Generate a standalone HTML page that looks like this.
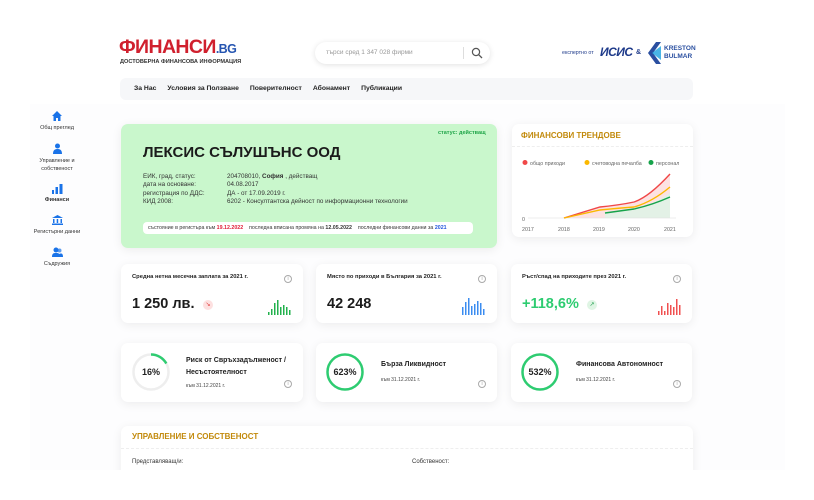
<!DOCTYPE html>
<html><head><meta charset="utf-8"><style>
*{margin:0;padding:0;box-sizing:border-box}
body{width:814px;height:500px;overflow:hidden;background:#fff;font-family:"Liberation Sans",sans-serif;color:#222;position:relative}
.a{position:absolute}
.card{position:absolute;background:#fff;border-radius:7px;box-shadow:0 2px 10px rgba(0,0,0,.07)}
.b{font-weight:bold}
.info{position:absolute;width:8px;height:8px;border:1px solid #aaa;border-radius:50%;font-size:5px;color:#999;text-align:center;line-height:6px}
.sb{position:absolute;width:70px;text-align:center;font-size:5.5px;color:#333;left:22px}
</style></head><body>
<div class="a" style="left:30px;top:104px;width:755px;height:370px;background:#fdfdfe"></div>
<div class="a b" style="left:119px;top:36px;font-size:19.5px;color:#d0202e;letter-spacing:-0.6px">ФИНАНСИ<span style="color:#2454b0;font-size:12.5px">.BG</span></div>
<div class="a b" style="left:120px;top:59px;font-size:5.6px;color:#333">ДОСТОВЕРНА ФИНАНСОВА ИНФОРМАЦИЯ</div>
<div class="a" style="left:315px;top:42px;width:175px;height:22px;border-radius:11px;box-shadow:0 1px 6px rgba(0,0,0,.12);background:#fff"></div>
<div class="a" style="left:326px;top:49px;font-size:6.5px;color:#999">търси сред 1 347 028 фирми</div>
<div class="a" style="left:463px;top:47px;width:1px;height:12px;background:#ddd"></div>
<svg class="a" style="left:471px;top:47px" width="12" height="12" viewBox="0 0 12 12"><circle cx="5" cy="5" r="3.6" fill="none" stroke="#555" stroke-width="1.2"/><path d="M7.7 7.7L11 11" stroke="#555" stroke-width="1.3"/></svg>
<div class="a" style="left:562px;top:50px;font-size:5.3px;color:#1e3a8a">експертно от</div>
<div class="a b" style="left:600px;top:45px;font-size:12px;color:#1e3a8a;font-style:italic;letter-spacing:-0.5px">ИСИС</div>
<div class="a b" style="left:636px;top:49px;font-size:7px;color:#1e3a8a">&amp;</div>
<svg class="a" style="left:647px;top:42px" width="16" height="22" viewBox="0 0 16 22"><path d="M9 0L1 11L9 22H14L6 11L14 0Z" fill="#2a4fa0"/><path d="M5 11L14 4V18Z" fill="#1ca3e0" opacity=".8"/></svg>
<div class="a b" style="left:664px;top:45px;font-size:6.5px;color:#2a4fa0;line-height:8px">KRESTON<br>BULMAR</div>
<div class="a" style="left:120px;top:78px;width:573px;height:22px;background:#f6f7f9;border-radius:6px"></div>
<div class="a b" style="left:134px;top:85px;font-size:6.8px;color:#222;word-spacing:0">За Нас<span style="margin-left:11px">Условия за Ползване</span><span style="margin-left:11px">Поверителност</span><span style="margin-left:11px">Абонамент</span><span style="margin-left:11px">Публикации</span></div>
<svg class="a" style="left:52px;top:111px" width="10" height="10" viewBox="0 0 10 10"><path d="M5 0L0 5H1.5V10H4V7H6V10H8.5V5H10Z" fill="#1a73e8"/></svg>
<div class="sb" style="top:125px">Общ преглед</div>
<svg class="a" style="left:53px;top:143px" width="9" height="11" viewBox="0 0 9 11"><circle cx="4.5" cy="3" r="2.5" fill="#1a73e8"/><path d="M0 11C0 7 2 6 4.5 6S9 7 9 11Z" fill="#1a73e8"/></svg>
<div class="sb" style="top:157px;line-height:8px">Управление и<br>собственост</div>
<svg class="a" style="left:52px;top:183px" width="11" height="11" viewBox="0 0 11 11"><rect x="0" y="7" width="2" height="4" fill="#1a73e8"/><rect x="3.5" y="4" width="2.5" height="7" fill="#1a73e8"/><rect x="7.5" y="1" width="3" height="10" fill="#1a73e8"/></svg>
<div class="sb b" style="top:197px">Финанси</div>
<svg class="a" style="left:52px;top:215px" width="11" height="10" viewBox="0 0 11 10"><path d="M5.5 0L0 3H11Z" fill="#1a73e8"/><rect x="1" y="4" width="1.5" height="4" fill="#1a73e8"/><rect x="4.7" y="4" width="1.5" height="4" fill="#1a73e8"/><rect x="8.5" y="4" width="1.5" height="4" fill="#1a73e8"/><rect x="0" y="8.5" width="11" height="1.5" fill="#1a73e8"/></svg>
<div class="sb" style="top:229px">Регистърни данни</div>
<svg class="a" style="left:52px;top:247px" width="11" height="10" viewBox="0 0 11 10"><circle cx="4" cy="3" r="2.5" fill="#1a73e8"/><circle cx="7.5" cy="3.5" r="2" fill="#1a73e8" opacity=".7"/><path d="M0 10C0 6 2 6 4 6S8 6 8 10Z M6 10C6 7 8 6.5 9 6.5S11 7 11 10Z" fill="#1a73e8"/></svg>
<div class="sb" style="top:261px">Съдружия</div>

<div class="card" style="left:121px;top:124px;width:376px;height:124px;background:#c9f7cc"></div>
<div class="a b" style="left:438px;top:130px;font-size:5.5px;color:#1fa548">статус: действащ</div>
<div class="a b" style="left:143px;top:144px;font-size:15px;color:#1b1b1b">ЛЕКСИС СЪЛУШЪНС ООД</div>
<div class="a" style="left:143px;top:173px;font-size:6.3px;color:#333;line-height:8.3px">ЕИК, град, статус:<br>дата на основане:<br>регистрация по ДДС:<br>КИД 2008:</div>
<div class="a" style="left:227px;top:173px;font-size:6.3px;color:#333;line-height:8.3px">204708010, <b>София</b> , действащ<br>04.08.2017<br>ДА - от 17.09.2019 г.<br>6202 - Консултантска дейност по информационни технологии</div>
<div class="a" style="left:143px;top:222px;width:330px;height:12px;background:#fff;border-radius:4px;font-size:5.3px;color:#333;line-height:12px;padding-left:5px;white-space:nowrap">състояние в регистъра към <b style="color:#e0203a">19.12.2022</b>&nbsp;&nbsp;&nbsp;&nbsp;последна вписана промяна на <b>12.05.2022</b>&nbsp;&nbsp;&nbsp;&nbsp;последни финансови данни за <b style="color:#2255dd">2021</b></div>

<div class="card" style="left:512px;top:124px;width:181px;height:113px"></div>
<div class="a b" style="left:521px;top:131px;font-size:8px;color:#c28a0c">ФИНАНСОВИ ТРЕНДОВЕ</div>
<div class="a" style="left:512px;top:146px;width:181px;border-top:1px dashed #eee"></div>
<svg class="a" style="left:512px;top:150px" width="181" height="85" viewBox="0 0 181 85">
<circle cx="13" cy="12.5" r="2.5" fill="#f04848"/><text x="18" y="15" font-size="5.3" fill="#666" font-family="Liberation Sans">общо приходи</text>
<circle cx="75" cy="12.5" r="2.5" fill="#fbb800"/><text x="80" y="15" font-size="5.3" fill="#666" font-family="Liberation Sans">счетоводна печалба</text>
<circle cx="139" cy="12.5" r="2.5" fill="#16a34a"/><text x="144" y="15" font-size="5.3" fill="#666" font-family="Liberation Sans">персонал</text>
<path d="M52 68L88 57Q108 55 122 52Q137 47 158 24V68Z" fill="#fde2e2"/>
<path d="M93 68V63L122 59Q140 55 158 43V68Z" fill="#e3f1e6"/>
<line x1="16" y1="68" x2="164" y2="68" stroke="#ddd" stroke-width=".6"/>
<path d="M52 68L88 57Q108 55 122 52Q137 47 158 24" fill="none" stroke="#f04848" stroke-width="1.4"/>
<path d="M52 68L88 60Q108 58 122 57Q140 52 158 37" fill="none" stroke="#fbb800" stroke-width="1.4"/>
<path d="M93 63L122 59Q140 55 158 47" fill="none" stroke="#16a34a" stroke-width="1.4"/>
<text x="10" y="71" font-size="5.3" fill="#666" font-family="Liberation Sans">0</text>
<g font-size="5.3" fill="#666" font-family="Liberation Sans"><text x="10" y="81">2017</text><text x="46" y="81">2018</text><text x="81" y="81">2019</text><text x="116" y="81">2020</text><text x="152" y="81">2021</text></g>
</svg>

<div class="card" style="left:121px;top:264px;width:182px;height:59px"></div>
<div class="a b" style="left:132px;top:274px;font-size:5.8px">Средна нетна месечна заплата за 2021 г.</div>
<div class="info" style="left:284px;top:275px">i</div>
<div class="a b" style="left:132px;top:296px;font-size:14.5px;color:#1b1b1b">1 250 лв.</div>
<div class="a" style="left:203px;top:300px;width:10px;height:10px;border-radius:50%;background:#fde0e0;color:#e04040;font-size:6px;text-align:center;line-height:10px">↘</div>
<svg class="a" style="left:268px;top:297px" width="24" height="18"><g fill="#22b14c"><rect x="0" y="15" width="1.5" height="3"/><rect x="3" y="12" width="1.5" height="6"/><rect x="6" y="6" width="1.5" height="12"/><rect x="9" y="3" width="1.5" height="15"/><rect x="12" y="10" width="1.5" height="8"/><rect x="15" y="8" width="1.5" height="10"/><rect x="18" y="10" width="1.5" height="8"/><rect x="21" y="13" width="1.5" height="5"/></g></svg>

<div class="card" style="left:316px;top:264px;width:181px;height:59px"></div>
<div class="a b" style="left:327px;top:274px;font-size:5.8px">Място по приходи в България за 2021 г.</div>
<div class="info" style="left:478px;top:275px">i</div>
<div class="a b" style="left:327px;top:296px;font-size:14.5px;color:#1b1b1b">42 248</div>
<svg class="a" style="left:462px;top:297px" width="24" height="18"><g fill="#3b8cf0"><rect x="0" y="10" width="1.5" height="8"/><rect x="3" y="5" width="1.5" height="13"/><rect x="6" y="1" width="1.5" height="17"/><rect x="9" y="9" width="1.5" height="9"/><rect x="12" y="7" width="1.5" height="11"/><rect x="15" y="4" width="1.5" height="14"/><rect x="18" y="6" width="1.5" height="12"/><rect x="21" y="12" width="1.5" height="6"/></g></svg>

<div class="card" style="left:511px;top:264px;width:181px;height:59px"></div>
<div class="a b" style="left:522px;top:274px;font-size:5.8px">Ръст/спад на приходите през 2021 г.</div>
<div class="info" style="left:673px;top:275px">i</div>
<div class="a b" style="left:522px;top:296px;font-size:14.5px;color:#2ecc71">+118,6%</div>
<div class="a" style="left:587px;top:300px;width:10px;height:10px;border-radius:50%;background:#dff5e4;color:#22a050;font-size:6px;text-align:center;line-height:10px">↗</div>
<svg class="a" style="left:658px;top:297px" width="24" height="18"><g fill="#f05050"><rect x="0" y="14" width="1.5" height="4"/><rect x="3" y="9" width="1.5" height="9"/><rect x="6" y="14" width="1.5" height="4"/><rect x="9" y="6" width="1.5" height="12"/><rect x="12" y="8" width="1.5" height="10"/><rect x="15" y="10" width="1.5" height="8"/><rect x="18" y="2" width="1.5" height="16"/><rect x="21" y="8" width="1.5" height="10"/></g></svg>

<div class="card" style="left:121px;top:343px;width:182px;height:59px"></div>
<svg class="a" style="left:131px;top:352px" width="40" height="40"><circle cx="20" cy="20" r="17.5" fill="none" stroke="#eee" stroke-width="2.5"/><path d="M20 2.5A17.5 17.5 0 0 1 35.3 11.5" fill="none" stroke="#2ecc71" stroke-width="2.5"/></svg>
<div class="a b" style="left:131px;top:367px;width:40px;text-align:center;font-size:9px">16%</div>
<div class="a b" style="left:186px;top:355px;font-size:7px;line-height:12px">Риск от Свръхзадълженост /<br>Несъстоятелност</div>
<div class="a" style="left:186px;top:383px;font-size:5px;color:#444">към 31.12.2021 г.</div>
<div class="info" style="left:284px;top:380px">i</div>

<div class="card" style="left:316px;top:343px;width:181px;height:59px"></div>
<svg class="a" style="left:325px;top:352px" width="40" height="40"><circle cx="20" cy="20" r="17.5" fill="none" stroke="#2ecc71" stroke-width="2.5"/></svg>
<div class="a b" style="left:325px;top:367px;width:40px;text-align:center;font-size:9px">623%</div>
<div class="a b" style="left:381px;top:361px;font-size:7px">Бърза Ликвидност</div>
<div class="a" style="left:381px;top:377px;font-size:5px;color:#444">към 31.12.2021 г.</div>
<div class="info" style="left:478px;top:380px">i</div>

<div class="card" style="left:511px;top:343px;width:181px;height:59px"></div>
<svg class="a" style="left:520px;top:352px" width="40" height="40"><circle cx="20" cy="20" r="17.5" fill="none" stroke="#2ecc71" stroke-width="2.5"/></svg>
<div class="a b" style="left:520px;top:367px;width:40px;text-align:center;font-size:9px">532%</div>
<div class="a b" style="left:576px;top:361px;font-size:7px">Финансова Автономност</div>
<div class="a" style="left:576px;top:377px;font-size:5px;color:#444">към 31.12.2021 г.</div>
<div class="info" style="left:673px;top:380px">i</div>

<div class="card" style="left:121px;top:426px;width:572px;height:60px;border-radius:7px 7px 0 0"></div>
<div class="a b" style="left:132px;top:432px;font-size:8px;color:#c28a0c">УПРАВЛЕНИЕ И СОБСТВЕНОСТ</div>
<div class="a" style="left:121px;top:448px;width:572px;border-top:1px dashed #eee"></div>
<div class="a" style="left:132px;top:459px;font-size:6px;color:#333">Представляващ/и:</div>
<div class="a" style="left:412px;top:459px;font-size:6px;color:#333">Собственост:</div>
<div class="a" style="left:0;top:470px;width:814px;height:30px;background:#fff"></div>
</body></html>
